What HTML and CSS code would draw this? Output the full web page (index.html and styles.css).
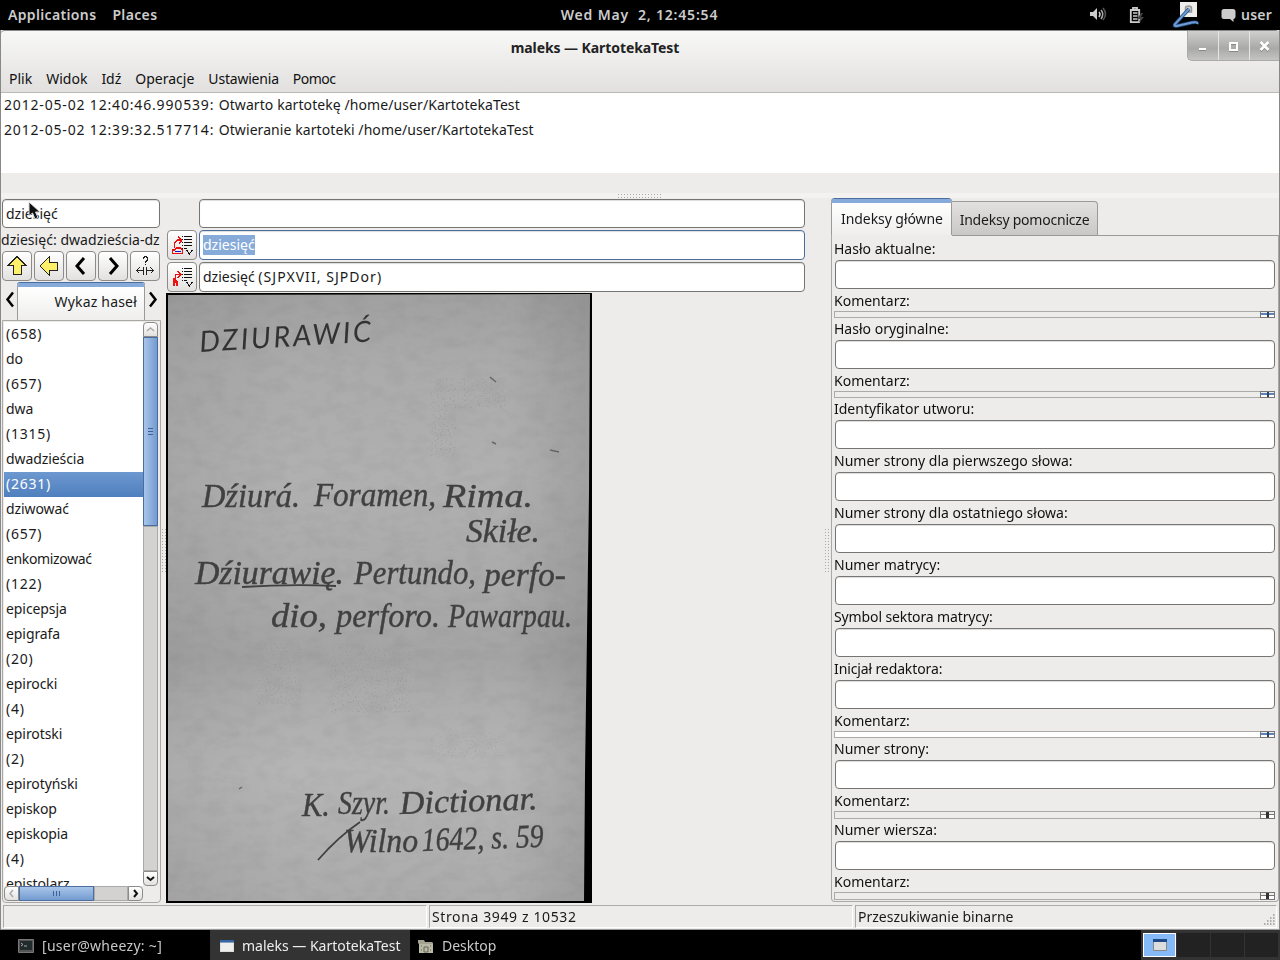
FILE: index.html
```html
<!DOCTYPE html>
<html lang="pl">
<head>
<meta charset="utf-8">
<title>maleks — KartotekaTest</title>
<link rel="stylesheet" href="styles.css">
</head>
<body>
<header class="panel">
  <span class="p-app">Applications</span><span class="p-places">Places</span>
  <span class="clock">Wed May&nbsp; 2, 12:45:54</span>
  <span class="tray">
    <svg class="i-vol" width="18" height="16" viewBox="0 0 18 16"><path d="M1 5h3l4-4v12l-4-4H1z" fill="#ccc"/><path d="M10 5q2 2 0 5" stroke="#ccc" stroke-width="1.5" fill="none"/><path d="M12 3q3.5 4 0 9" stroke="#aaa" stroke-width="1.5" fill="none"/><path d="M14 1q5 6 0 12" stroke="#555" stroke-width="1.5" fill="none"/></svg>
    <svg class="i-bat" width="16" height="17" viewBox="0 0 16 17"><path d="M4 2V.8h4V2M1.800 3h8.400v12.200H1.800z" stroke="#ccc" stroke-width="1.800" fill="none"/><path d="M4 6h4.500M4 9h4.500M4 12h4.500" stroke="#ccc" stroke-width="1.600"/><path d="M12 6l-4 6h3l-1 4 5-6h-3l2-4z" fill="#444"/></svg>
    <svg class="i-net" width="27" height="28" viewBox="0 0 27 28"><path d="M8 1h17v15H8z" fill="#eeeeec"/><path d="M13.500 11V7q0-2 3-2t3 2v4z" fill="#ccc" stroke="#999" stroke-width="1.500"/><path d="M17 8L3 23q-2 3 4 1.500l13-3q6-1 5 1.500" fill="none" stroke="#204a87" stroke-width="3.500"/><path d="M17 8L3 23q-2 3 4 1.500l13-3q6-1 5 1.500" fill="none" stroke="#6e9bd0" stroke-width="2"/></svg>
    <svg class="i-chat" width="15" height="15" viewBox="0 0 15 15"><path d="M3 1h9q2.500 0 2.500 2.500v5q0 2-2 2.500v3L9 11H3Q.5 11 .5 8.500v-5Q.5 1 3 1z" fill="#ccc"/></svg>
    <span class="user">user</span>
  </span>
</header>

<main class="window">
  <div class="head">
    <div class="title">maleks — KartotekaTest</div>
    <div class="winbtns">
      <i><svg width="29" height="29" viewBox="0 0 29 29"><path d="M11 19.500h7" stroke="#888" stroke-width="1"/><path d="M11 18h7" stroke="#fff" stroke-width="2"/></svg></i><i><svg width="29" height="29" viewBox="0 0 29 29"><path d="M11 13h7v7h-7z" stroke="#888" fill="none" stroke-width="2"/><path d="M11 12h7v7h-7z" stroke="#fff" fill="none" stroke-width="2"/></svg></i><i><svg width="29" height="29" viewBox="0 0 29 29"><path d="M10.500 12l8 8m0-8l-8 8" stroke="#888" stroke-width="2.500"/><path d="M10.500 11l8 8m0-8l-8 8" stroke="#fff" stroke-width="2.500"/></svg></i>
    </div>
    <nav class="menu"><span>Plik</span><span>Widok</span><span>Idź</span><span>Operacje</span><span class="m5">Ustawienia</span><span class="m6">Pomoc</span></nav>
  </div>
  <div class="log">
    <div><span class="l1">2012-05-02 12:40:46.990539: </span><span class="l2">Otwarto kartotekę /home/user/KartotekaTest</span></div>
    <div><span class="l1">2012-05-02 12:39:32.517714: </span><span class="l2">Otwieranie kartoteki /home/user/KartotekaTest</span></div>
  </div>
  <div class="sash"><b class="dots dots-h"></b></div>

  <div class="work">
    <section class="left">
      <div class="entry">dziesięć
        <svg class="cursor" width="14" height="20" viewBox="0 0 14 20"><path d="M1 1v14l3.500-3 2.500 6 3-1.500-2.500-5.500h4.500z" fill="#111" stroke="#ddd"/></svg>
      </div>
      <div class="range">dziesięć: dwadzieścia-dz</div>
      <div class="tools">
        <button><svg width="20" height="20" viewBox="0 0 20 20"><path d="M10 .5l9 9h-5v9H6v-9H1z" fill="#fcf06a" stroke="#222" shape-rendering="crispEdges"/></svg></button>
        <button><svg width="20" height="20" viewBox="0 0 20 20"><path d="M1 10l9-9v5h8.500v8H10v5z" fill="#fcf06a" stroke="#222" shape-rendering="crispEdges"/></svg></button>
        <button><svg width="20" height="20" viewBox="0 0 20 20"><path d="M13 2l-7 8 7 8" fill="none" stroke="#000" stroke-width="3"/></svg></button>
        <button><svg width="20" height="20" viewBox="0 0 20 20"><path d="M7 2l7 8-7 8" fill="none" stroke="#000" stroke-width="3"/></svg></button>
        <button><svg width="20" height="20" viewBox="0 0 20 20" shape-rendering="crispEdges"><path d="M8.500 3V1.500h1v-1h2v1h1V4l-2 2v1M10.500 8v1M1.500 14.500h7M4.500 11.500l-3 3 3 3M11.500 14.500h7M15.500 11.500l3 3-3 3M8.500 11v8M11.500 11v8" fill="none" stroke="#222"/></svg></button>
      </div>
      <div class="tabrow">
        <svg width="15" height="36" viewBox="0 0 15 36"><path d="M11 9.500l-5.500 7 5.500 7" fill="none" stroke="#000" stroke-width="2.500"/></svg>
        <div class="tab-active">Wykaz haseł</div>
        <svg width="15" height="36" viewBox="0 0 15 36"><path d="M5 9.500l5.500 7-5.500 7" fill="none" stroke="#000" stroke-width="2.500"/></svg>
      </div>
      <div class="listbox">
        <ul class="list"><li class="n">(658)</li><li>do</li><li class="n">(657)</li><li>dwa</li><li class="n">(1315)</li><li>dwadzieścia</li><li class="n sel">(2631)</li><li>dziwować</li><li class="n">(657)</li><li class="tight">enkomizować</li><li class="n">(122)</li><li>epicepsja</li><li>epigrafa</li><li class="n">(20)</li><li>epirocki</li><li class="n">(4)</li><li>epirotski</li><li class="n">(2)</li><li>epirotyński</li><li>episkop</li><li>episkopia</li><li class="n">(4)</li><li>epistolarz</li></ul>
        <div class="vbar"><b class="up"><svg width="13" height="13" viewBox="0 0 13 13"><path d="M3 8l3.500-3L10 8" fill="none" stroke="#aaa" stroke-width="1.500"/></svg></b><b class="thumb"></b><b class="trough"></b><b class="down"><svg width="13" height="13" viewBox="0 0 13 13"><path d="M3 5l3.500 3L10 5" fill="none" stroke="#111" stroke-width="2"/></svg></b></div>
        <div class="hbar"><b class="lf"><svg width="13" height="13" viewBox="0 0 13 13"><path d="M8 3L5 6.500 8 10" fill="none" stroke="#aaa" stroke-width="1.500"/></svg></b><b class="thumb"></b><b class="trough"></b><b class="rt"><svg width="13" height="13" viewBox="0 0 13 13"><path d="M5 3l3 3.500L5 10" fill="none" stroke="#111" stroke-width="2"/></svg></b></div>
      </div>
    </section>
    <div class="vsash"><b class="dots dots-v"></b></div>

    <section class="mid">
      <div class="fields">
        <span></span><div class="entry"></div>
        <button><svg width="22" height="22" viewBox="0 0 22 22" shape-rendering="crispEdges"><path d="M11 2.500h1M13 2.500h8M11 5.500h1M13 5.500h8M11 8.500h1M13 8.500h8M11 11.500h1M13 11.500h8M11 14.500h1M13 14.500h3" stroke="#111"/><path d="M15.500 16l3 4 3-4" stroke="#111" fill="none"/><path d="M3.500 14V9l3-3h4M7 2.500l4 3.500-3 4M1 19.500h11M1.500 19v-3h2l2-2h4l2 2v3" stroke="#e81010" stroke-width="1.200" fill="none"/><path d="M4 17.500h6" stroke="#11c"/></svg></button><div class="entry focus"><mark>dziesięć</mark></div>
        <button><svg width="22" height="22" viewBox="0 0 22 22" shape-rendering="crispEdges"><path d="M11 2.500h1M13 2.500h8M11 5.500h1M13 5.500h8M11 8.500h1M13 8.500h8M11 11.500h1M13 11.500h8M11 14.500h1M13 14.500h3" stroke="#111"/><path d="M15.500 16l3 4 3-4" stroke="#111" fill="none"/><path d="M4.500 12V8.500h5M6.500 5l3.500 3.500L6.500 12" stroke="#e81010" stroke-width="1.200" fill="none"/><path d="M2 12h3l1 3h1v5H5v-3H4v3H2z" fill="#f01010"/></svg></button><div class="entry">dziesięć <span class="src">(SJPXVII, SJPDor)</span></div>
      </div>
      <svg class="scan" width="426" height="610" viewBox="0 0 426 610">
        <defs>
          <linearGradient id="paper" x1="0" y1="0" x2="0" y2="1"><stop offset="0" stop-color="#a0a0a0"/><stop offset=".12" stop-color="#ababab"/><stop offset=".3" stop-color="#b0b0b0"/><stop offset=".48" stop-color="#aaa"/><stop offset=".6" stop-color="#a4a4a4"/><stop offset=".66" stop-color="#acacac"/><stop offset=".78" stop-color="#b5b5b5"/><stop offset="1" stop-color="#ababab"/></linearGradient>
          <linearGradient id="side"><stop offset="0" stop-color="#000" stop-opacity=".05"/><stop offset=".3" stop-color="#000" stop-opacity="0"/><stop offset=".8" stop-color="#000" stop-opacity="0"/><stop offset="1" stop-color="#000" stop-opacity=".09"/></linearGradient>
          <filter id="fiber" x="0" y="0" width="1" height="1"><feTurbulence type="fractalNoise" baseFrequency=".05 .09" numOctaves="3" seed="4"/><feColorMatrix values="0 0 0 0 0  0 0 0 0 0  0 0 0 0 0  .5 0 0 0 -.2"/></filter>
          <filter id="specks" x="0" y="0" width="1" height="1"><feTurbulence type="fractalNoise" baseFrequency=".55" numOctaves="2" seed="9"/><feColorMatrix values="0 0 0 0 .3  0 0 0 0 .3  0 0 0 0 .3  5 0 0 0 -2.900"/></filter>
          <filter id="ink"><feGaussianBlur stdDeviation=".45"/></filter>
        </defs>
        <path d="M0 0h426v610H0z" fill="#000"/>
        <path d="M2 2L424 1 423 200 419 480 418 608 2 608z" fill="url(#paper)"/>
        <path d="M2 2L424 1 423 200 419 480 418 608 2 608z" fill="url(#side)"/>
        <rect x="2" y="2" width="417" height="606" filter="url(#fiber)" opacity=".16"/>
        <g opacity=".6"><rect x="264" y="85" width="75" height="30" filter="url(#specks)"/><rect x="264" y="115" width="26" height="50" filter="url(#specks)"/><rect x="90" y="350" width="45" height="62" filter="url(#specks)"/><rect x="165" y="350" width="80" height="70" filter="url(#specks)"/><rect x="264" y="440" width="75" height="26" filter="url(#specks)" opacity=".6"/></g>
        <g class="hand" filter="url(#ink)">
          <text class="caps" x="34" y="59" textLength="172" transform="rotate(-3.500 34 59)">DZIURAWIĆ</text>
          <text x="36" y="214" textLength="98" lengthAdjust="spacingAndGlyphs">Dźiurá.</text><text x="148" y="213" textLength="122" lengthAdjust="spacingAndGlyphs">Foramen,</text><text x="277" y="214" textLength="90" lengthAdjust="spacingAndGlyphs">Rima.</text>
          <text x="300" y="249" textLength="74" lengthAdjust="spacingAndGlyphs">Skiłe.</text>
          <text x="29" y="291" textLength="149" lengthAdjust="spacingAndGlyphs">Dźiurawię.</text><text x="188" y="291" textLength="122" lengthAdjust="spacingAndGlyphs">Pertundo,</text><text x="318" y="293" textLength="82" lengthAdjust="spacingAndGlyphs">perfo-</text>
          <text x="105" y="334" textLength="56" lengthAdjust="spacingAndGlyphs">dio,</text><text x="170" y="334" textLength="104" lengthAdjust="spacingAndGlyphs">perforo.</text><text x="282" y="334" textLength="124" lengthAdjust="spacingAndGlyphs">Pawarpau.</text>
          <text x="136" y="523" textLength="28" lengthAdjust="spacingAndGlyphs">K.</text><text x="172" y="521" textLength="52" lengthAdjust="spacingAndGlyphs">Szyr.</text><text x="234" y="521" textLength="138" lengthAdjust="spacingAndGlyphs" transform="rotate(-2 234 521)">Dictionar.</text>
          <text x="178" y="559" textLength="74" lengthAdjust="spacingAndGlyphs">Wilno</text><text x="256" y="558" textLength="122" lengthAdjust="spacingAndGlyphs" transform="rotate(-2 256 558)">1642, s. 59</text>
          <path d="M76 294q50-3 94-1M152 567q20-23 42-38" class="stroke"/>
        </g>
        <path d="M384 157l9 2M324 84l6 5M326 149l4 2M73 496l3-2" stroke="#666" stroke-width="1.500"/>
      </svg>
    </section>
    <div class="vsash"><b class="dots dots-v"></b></div>

    <section class="right">
      <div class="tabs"><div class="t1">Indeksy główne</div><div class="t2">Indeksy pomocnicze</div></div>
      <div class="form">
        <label>Hasło aktualne:</label><div class="entry"></div><label>Komentarz:</label><div class="slim"><b class="blue"></b></div>
        <label>Hasło oryginalne:</label><div class="entry"></div><label>Komentarz:</label><div class="slim"><b class="blue"></b></div>
        <label>Identyfikator utworu:</label><div class="entry"></div>
        <label>Numer strony dla pierwszego słowa:</label><div class="entry"></div>
        <label>Numer strony dla ostatniego słowa:</label><div class="entry"></div>
        <label>Numer matrycy:</label><div class="entry"></div>
        <label class="c">Symbol sektora matrycy:</label><div class="entry"></div>
        <label class="c">Inicjał redaktora:</label><div class="entry"></div><label>Komentarz:</label><div class="slim white"><b class="blue"></b></div>
        <label>Numer strony:</label><div class="entry"></div><label>Komentarz:</label><div class="slim tall"><b></b></div>
        <label>Numer wiersza:</label><div class="entry"></div><label>Komentarz:</label><div class="slim tall"><b></b></div>
      </div>
    </section>
  </div>
  <footer class="status"><div></div><div><span class="s2">Strona 3949 z 10532</span></div><div><span>Przeszukiwanie binarne</span><svg width="13" height="13" viewBox="0 0 13 13"><path d="M10 1h2M7 4h5M4 7h8M1 10h11" stroke="#999" stroke-dasharray="1.500 1.500" stroke-width="1.500"/></svg></div></footer>
</main>

<nav class="taskbar">
  <div class="task w1"><svg width="16" height="14" viewBox="0 0 16 14"><path d="M.5 .5h15v13H.5z" fill="#555" stroke="#777"/><path d="M2 2h12v9H2z" fill="#222b2b"/><path d="M3 4l2 1.500L3 7M6 7h3" stroke="#aaa" fill="none"/></svg><span class="k1">[user@wheezy: ~]</span></div>
  <div class="task w2"><svg width="14" height="12" viewBox="0 0 14 12"><path d="M0 0h14v12H0z" fill="#ddd"/><path d="M0 0h14v2.500H0z" fill="#3465a4"/><path d="M1 3h12v8H1z" fill="#eeeeec"/></svg><span>maleks — KartotekaTest</span></div>
  <div class="task w3"><svg width="16" height="15" viewBox="0 0 16 15"><path d="M0 1h6l1 2h7l1 1v10H1V5L0 4z" fill="#a3a38f"/><path d="M1 5h14v9H1z" fill="#babaa6"/><path d="M6 8h4v5H6zM3 7h1M12 7h1M3 11h1M12 11h1" stroke="#666657" fill="none"/></svg><span>Desktop</span></div>
  <div class="pager"><b><svg width="14" height="12" viewBox="0 0 14 12"><path d="M.5 .5h13v11H.5z" fill="#ddd" stroke="#888"/><path d="M0 0h14v3H0z" fill="#204a87"/></svg></b><b></b><b></b><b></b></div>
</nav>
</body>
</html>
```

FILE: styles.css
```css
* { box-sizing: border-box; }
body { margin: 0; width: 1280px; height: 960px; overflow: hidden; display: grid; grid-template-rows: 30px 900px 30px; font: 14px/20px "Noto Sans", "Open Sans", sans-serif; color: #1a1a1a; background: #000; white-space: nowrap; }
svg { display: block; flex: none; }
b, i { display: block; }
button { padding: 0; margin: 0; }

.panel { display: flex; align-items: center; color: #ccc; font-weight: 600; position: relative; padding-left: 8px; }
.p-app, .p-places { letter-spacing: .35px; }
.p-places { margin-left: 16px; }
.clock { position: absolute; left: 0; right: 1px; text-align: center; letter-spacing: .82px; }
.tray { margin-left: auto; display: flex; align-items: center; padding-right: 8px; }
.i-vol { margin-right: 22px; }
.i-bat { margin-right: 27px; }
.i-net { margin-right: 22px; }
.i-chat { margin-right: 5px; }
.user { letter-spacing: .2px; }

.window { display: grid; grid-template-rows: 63px 80px 25px 705px 27px; background: #edeceb; border-left: 1px solid #888; border-right: 1px solid #888; }
.head { position: relative; border-top: 1px solid #888; border-bottom: 1px solid #bbbbb6; border-radius: 4px 4px 0 0; background: linear-gradient(#f8f8f7, #e1e0df); display: grid; grid-template-rows: 35px 26px; }
.title { text-align: center; padding-right: 90px; line-height: 33px; font-weight: 700; letter-spacing: -.08px; color: #222; }
.winbtns { position: absolute; right: 0; top: 0; width: 92px; height: 30px; display: flex; background: linear-gradient(#cfcfcd, #a9a9a7 60%, #c4c4c2); border: 1px solid #aaa; border-top: 0; border-right: 0; border-radius: 0 0 0 5px; }
.winbtns i { width: 31px; border-left: 1px solid #e6e6e6; }
.winbtns i:first-child { border-left: 0; }
.menu { display: flex; line-height: 26px; padding-left: 8px; gap: 14px; color: #111; }
.m5 { letter-spacing: -.2px; }
.m6 { letter-spacing: -.5px; }
.log { background: #fff; padding-left: 3px; }
.log div { height: 25px; line-height: 24px; white-space: pre; }
.l1 { letter-spacing: .83px; }
.l2 { letter-spacing: .08px; }
.sash { padding-top: 20px; background: linear-gradient(#edeceb 20px, #f3f2f1 20px); }
.dots { background-image: radial-gradient(circle, #aaa 0.7px, transparent 0.9px); background-size: 3px 3px; }
.dots-h { width: 46px; height: 5px; margin: 0 auto; }
.dots-v { width: 5px; height: 46px; }

.work { display: grid; grid-template-columns: 160px 5px 658px 7px 448px; height: 705px; }
.vsash { display: flex; align-items: center; }
.entry { height: 29px; background: #fff; border: 1px solid #777571; border-radius: 4px; padding-left: 4px; line-height: 27px; box-shadow: inset 0 1px 1px #ddd; }
.left { padding: 1px 1px 0; min-width: 0; }
.left > .entry { position: relative; width: 158px; padding-left: 3px; }
.cursor { position: absolute; left: 25px; top: 1px; }
.range { height: 23px; line-height: 24px; width: 159px; margin-left: -1px; overflow: hidden; letter-spacing: .04px; }
.tools { display: flex; gap: 2px; }
button { width: 30px; height: 30px; border: 1px solid #8d8b88; border-radius: 4px; background: linear-gradient(#fff, #e2e1e0); display: flex; align-items: center; justify-content: center; }
.tabrow { display: grid; grid-template-columns: 15px 128px 15px; height: 37px; margin-top: 2px; }
.tab-active { border: 1px solid #9c9a97; border-top: 4px solid #86aad9; box-shadow: 0 -1px #4b6e9f; border-bottom: 0; border-radius: 3px 3px 0 0; background: linear-gradient(#fff, #efeeed); text-align: right; padding-right: 7px; line-height: 30px; letter-spacing: .18px; }
.listbox { width: 159px; height: 583px; border: 1px solid #aaa8a5; border-radius: 0 0 4px 4px; padding: 1px; display: grid; grid-template: 564px 15px / 139px 15px; }
.list { list-style: none; margin: 0; padding: 0; background: #fff; overflow: hidden; letter-spacing: -.08px; }
.list li { height: 25px; line-height: 24px; padding-left: 2px; }
.list .n { letter-spacing: .75px; }
.list .tight { letter-spacing: -.35px; }
.list .sel { background: linear-gradient(#6d98d0, #4f7fbe); color: #fff; }
.vbar { display: flex; flex-direction: column; }
.hbar { display: flex; width: 139px; }
.vbar b, .hbar b { border: 1px solid #8d8b88; background: linear-gradient(#fff, #e2e1e0); }
.vbar .up { height: 15px; border-radius: 4px 4px 0 0; }
.vbar .thumb { height: 189px; background: repeating-linear-gradient(#3b6298 0 1px, transparent 1px 3px) center/5px 7px no-repeat, linear-gradient(90deg, #a9c5ea, #739bd0); border-color: #4b6e9f; }
.vbar .trough, .hbar .trough { flex: 1; background: #d4d2d0; border-color: #aaa; }
.vbar .down { height: 15px; border-radius: 0 0 4px 4px; }
.hbar .lf { width: 15px; border-radius: 4px 0 0 4px; }
.hbar .thumb { width: 75px; background: repeating-linear-gradient(90deg, #3b6298 0 1px, transparent 1px 3px) center/7px 5px no-repeat, linear-gradient(#a9c5ea, #739bd0); border-color: #4b6e9f; }
.hbar .rt { width: 15px; border-radius: 0 4px 4px 0; }

.fields { display: grid; grid-template: 29px 30px 30px / 30px 606px; gap: 2px; padding: 1px 0 0 1px; }
.fields .entry { padding-left: 3px; height: auto; }
.entry.focus { border-color: #4b6e9f; }
mark { background: #86abd9; color: #fff; display: inline-block; line-height: 20px; }
.src { letter-spacing: 1.05px; }
.scan { margin-top: 1px; }
.hand text { font: italic 33px "Liberation Serif", serif; fill: #404040; stroke: #404040; stroke-width: .4px; }
.hand .caps { font: italic 29px Lato, sans-serif; stroke: none; fill: #333; }
.stroke { fill: none; stroke: #404040; stroke-width: 1.8; }

.tabs { display: flex; align-items: flex-end; height: 37px; padding-top: 1px; }
.t1 { width: 121px; height: 36px; padding-left: 1px; text-align: center; line-height: 32px; letter-spacing: -.07px; border: 1px solid #9c9a97; border-top: 4px solid #86aad9; border-bottom: 0; border-radius: 4px 4px 0 0; box-shadow: 0 -1px #4b6e9f; background: linear-gradient(#fff, #efeeed); }
.t2 { width: 146px; height: 34px; text-align: center; line-height: 36px; letter-spacing: -.22px; border: 1px solid #9c9a97; border-left: 0; border-bottom: 0; border-radius: 0 4px 0 0; background: linear-gradient(#e2e1e0, #c9c8c6); }
.form { height: 667px; border: 1px solid #aaa8a5; border-top: 0; border-radius: 0 0 4px 4px; padding: 3px 3px 0 2px; background: linear-gradient(#9c9a97, #9c9a97) 120px 0/327px 1px no-repeat; }
.form label { display: block; height: 22px; line-height: 22px; color: #111; }
.form .c { letter-spacing: -.12px; }
.form .entry { width: 440px; margin-left: 1px; margin-bottom: 1px; }
.slim { height: 7px; margin-top: -1px; width: 441px; border: 1px solid #aaa; display: flex; justify-content: flex-end; }
.slim b { width: 15px; margin: -1px; border: 1px solid #777; background: linear-gradient(90deg, transparent 5px, #333 5px 8px, transparent 8px), linear-gradient(#eee 2px, #777 2px 3px, #fff 3px); }
.slim .blue { background: linear-gradient(90deg, transparent 6px, #345 6px 8px, transparent 8px), linear-gradient(#eee 1px, #5b84ba 1px 3px, #fff 3px); }
.slim.white { background: #fff; }
.slim.tall { height: 8px; }
.status { display: grid; grid-template-columns: 424px 424px 422px; gap: 2px; padding: 2px 0 1px 2px; border-bottom: 1px solid #999; }
.status div { border: 1px solid #fff; border-top-color: #aaa; border-left-color: #aaa; display: flex; align-items: center; justify-content: space-between; padding-left: 2px; }
.status svg { align-self: flex-end; }
.s2 { letter-spacing: .62px; }

.taskbar { display: flex; color: #c8c8c8; }
.task { display: flex; align-items: center; padding-top: 2px; }
.w1 { width: 210px; padding-left: 18px; gap: 8px; }
.k1 { letter-spacing: .3px; }
.w2 { width: 200px; padding-left: 10px; gap: 8px; background: #333; color: #eee; }
.w3 { padding-left: 8px; gap: 8px; }
.pager { margin-left: auto; width: 139px; background: #333; display: grid; grid-template-columns: 33px 33px 33px 33px; gap: 1px; padding: 3px 2px; }
.pager b { background: #222; }
.pager b:first-child { background: #86b9f7; border: 1px solid #fff; display: flex; align-items: center; justify-content: center; }
```
